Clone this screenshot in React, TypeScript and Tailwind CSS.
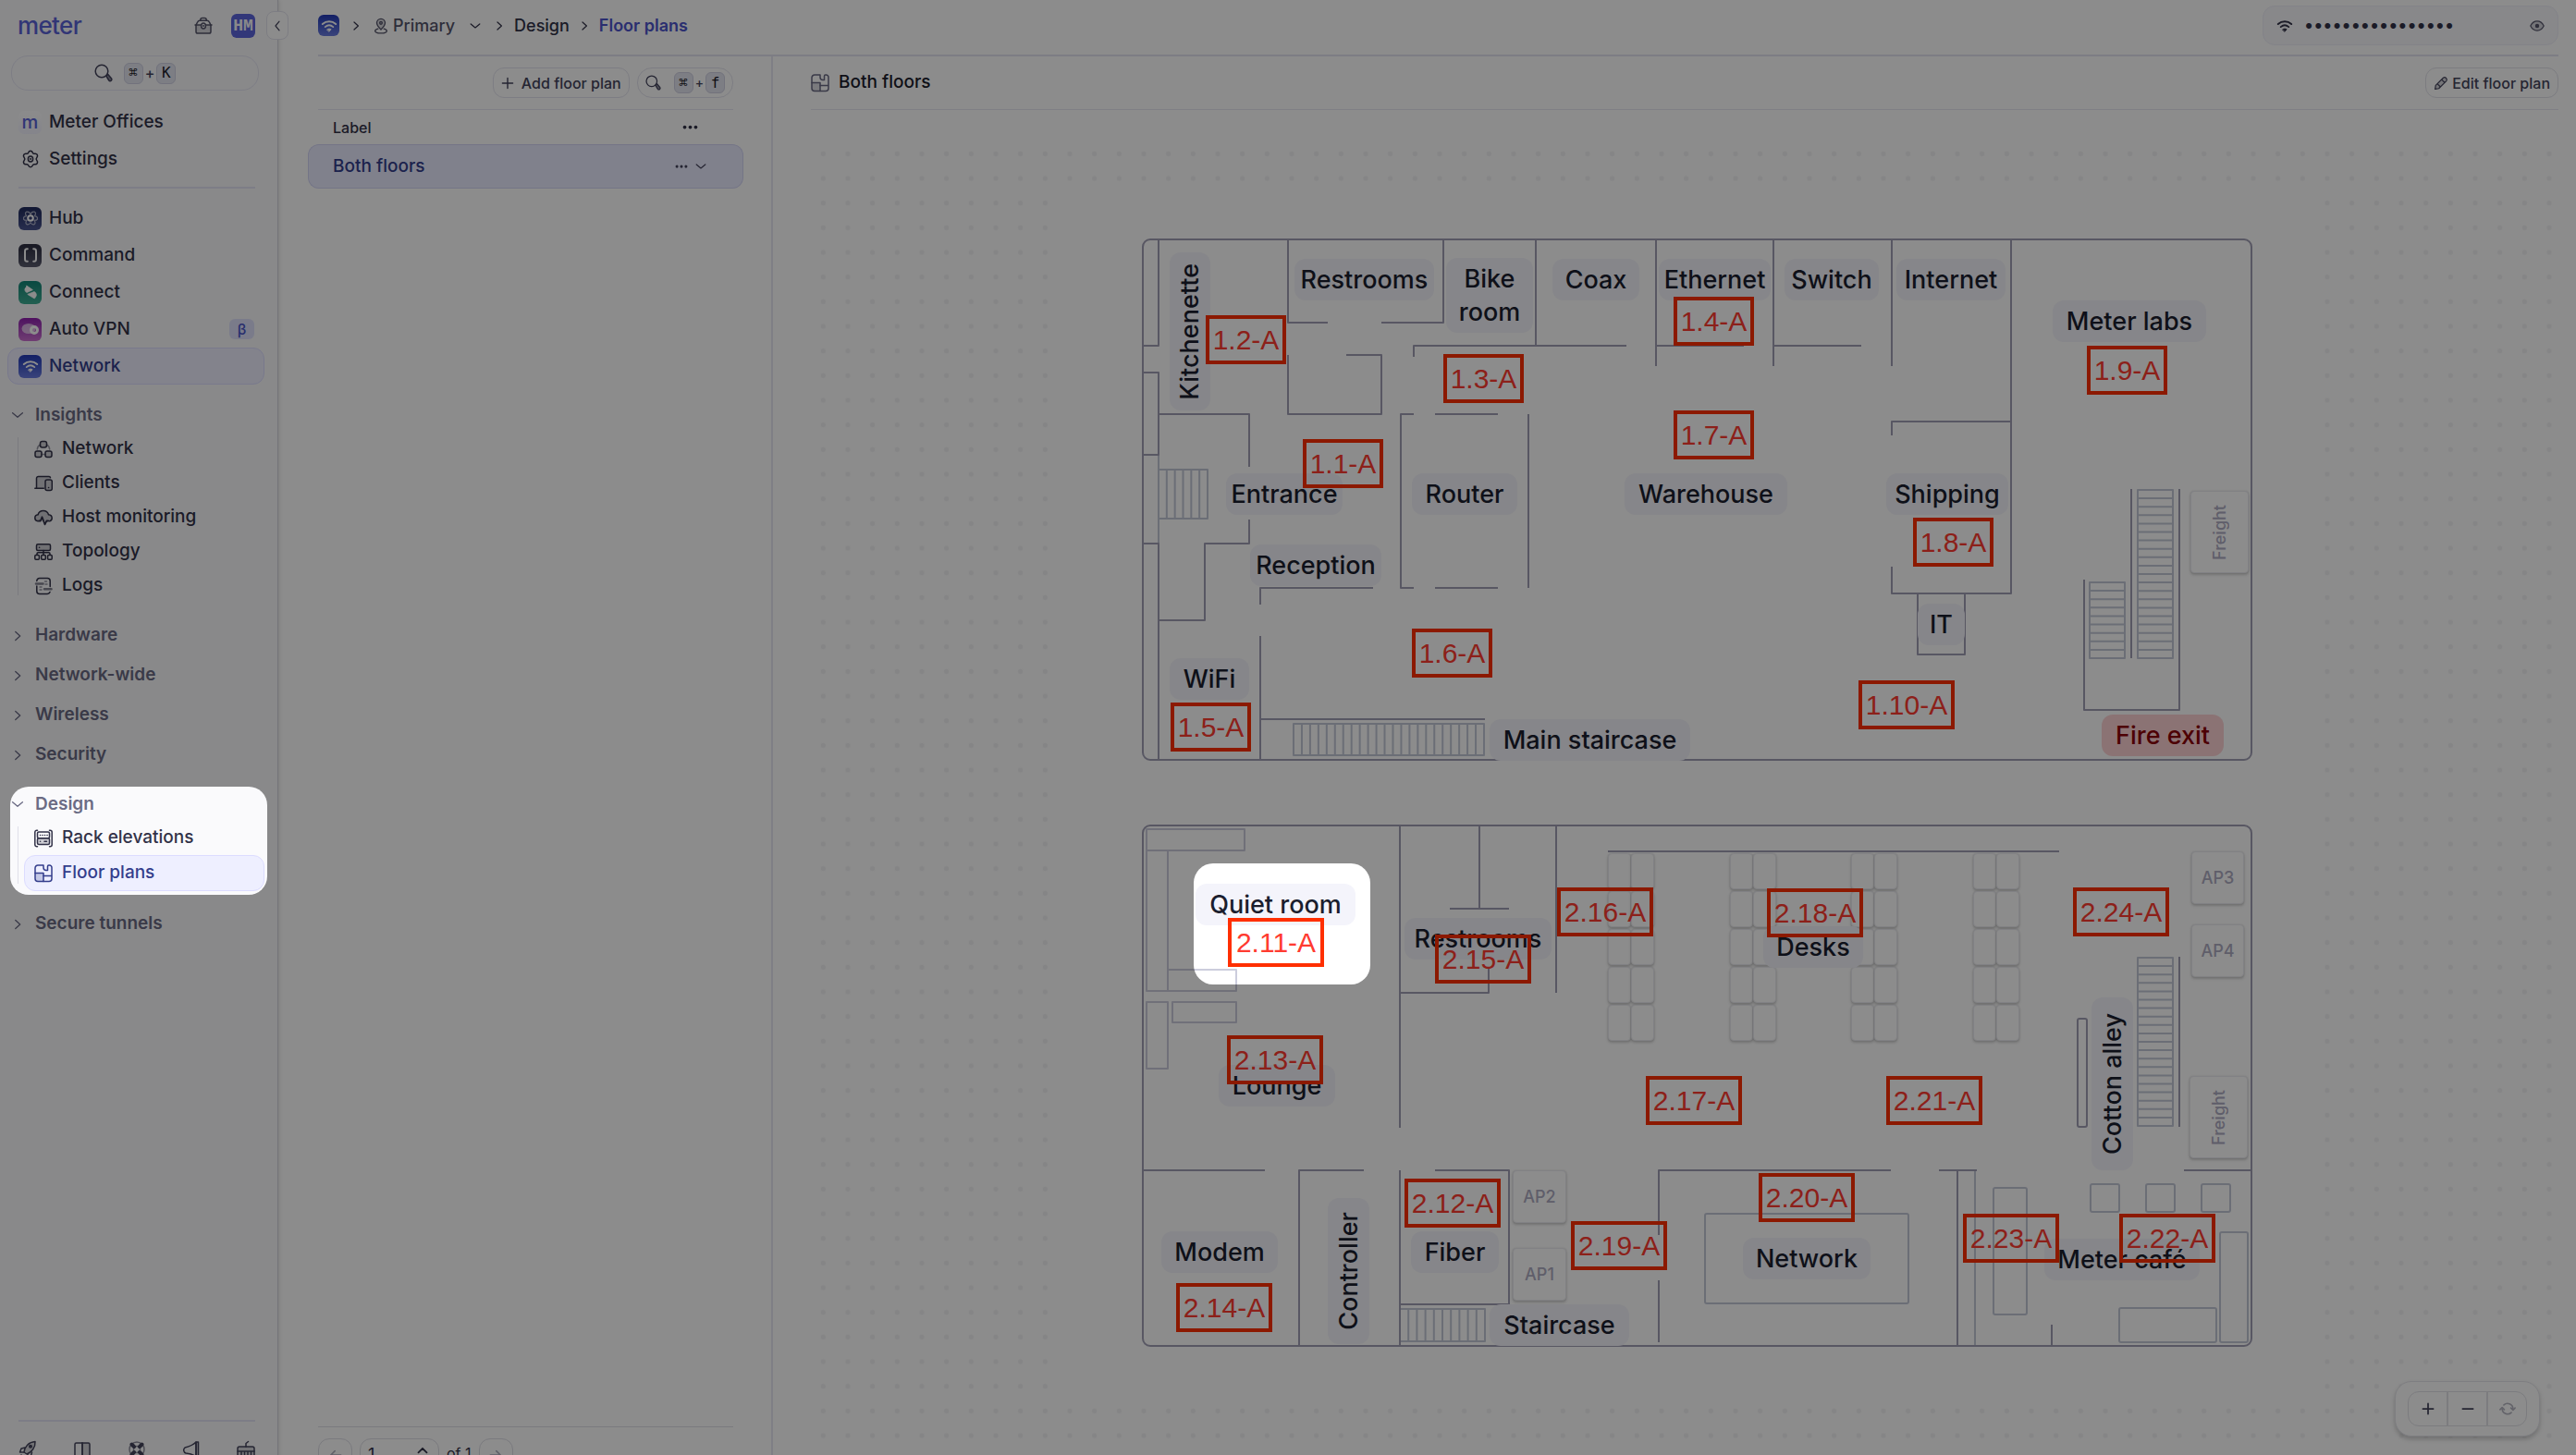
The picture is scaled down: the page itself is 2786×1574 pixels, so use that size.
import React from "react";

type IconProps = { className?: string };

function Icon({ className = "size-5", children }: IconProps & { children: React.ReactNode }) {
  return (
    <svg
      viewBox="0 0 20 20"
      fill="none"
      stroke="currentColor"
      strokeWidth="1.5"
      strokeLinecap="round"
      strokeLinejoin="round"
      className={"shrink-0 " + className}
      aria-hidden="true"
    >
      {children}
    </svg>
  );
}

const tint = { fill: "currentColor", fillOpacity: 0.22 };

const ToolboxIcon = (p: IconProps) => (
  <Icon {...p}>
    <path d="M6.800 4.200V3.500a2 2 0 0 1 2-2h2.400a2 2 0 0 1 2 2v.7" />
    <path d="M2 9l1.800-3.400A2.400 2.400 0 0 1 6 4.200h8a2.400 2.400 0 0 1 2.200 1.400L18 9" />
    <path d="M1 9h18M2 9h16v7.200a1.800 1.800 0 0 1-1.800 1.800H3.800A1.800 1.800 0 0 1 2 16.200z" {...tint} />
    <ellipse cx="10" cy="10" rx="2.400" ry="3" fill="#fafafc" />
    <path d="M10 9.500v1" />
  </Icon>
);
const SearchIcon = (p: IconProps) => (
  <Icon {...p}>
    <circle cx="8" cy="8" r="6.800" />
    <path d="m12.800 13.200 2-1.700 3.600 4.200a1.700 1.700 0 0 1-2.600 2.300z" fill="currentColor" fillOpacity="0.6" />
  </Icon>
);
const GearIcon = (p: IconProps) => (
  <Icon {...p}>
    <path d="M7.600 3.200C8.200 1.600 8.600 1.200 10 1.200s1.800.4 2.400 2c.4 1 1 1.300 2 1.100 1.700-.3 2.200-.1 2.900 1.100s.6 1.700-.5 3c-.7.800-.7 2.400 0 3.200 1.100 1.300 1.200 1.800.5 3s-1.200 1.400-2.900 1.100c-1-.2-1.600.1-2 1.100-.6 1.600-1 2-2.400 2s-1.800-.4-2.400-2c-.4-1-1-1.300-2-1.100-1.700.3-2.200.1-2.900-1.100s-.6-1.700.5-3c.7-.8.7-2.400 0-3.200-1.100-1.300-1.200-1.800-.5-3s1.200-1.400 2.900-1.100c1 .2 1.600-.1 2-1.100z" />
    <ellipse cx="10" cy="10" rx="2.600" ry="3" />
    <path d="M10 9.500v1" />
  </Icon>
);
const NodesIcon = (p: IconProps) => (
  <Icon {...p}>
    <rect x="6.500" y="1.500" width="7" height="6.500" rx="2.200" {...tint} />
    <rect x="1" y="12" width="7" height="6.500" rx="2" {...tint} />
    <rect x="12" y="12" width="7" height="6.500" rx="2" {...tint} />
    <path d="M6.500 5C4.500 6 3.500 8 3.300 10M13.500 5c2 1 3 3 3.200 5M8 15.500h4" strokeOpacity="0.5" />
  </Icon>
);
const ClientsIcon = (p: IconProps) => (
  <Icon {...p}>
    <path d="M2.500 14V4.500a2 2 0 0 1 2-2h12.500v3h-3.500a1.500 1.500 0 0 0-1.500 1.500v8H2.500z" {...tint} stroke="none" />
    <path d="M.8 15.200h9.500M2.500 15V4.500a2 2 0 0 1 2-2h11.500a1.500 1.500 0 0 1 1.500 1.200" />
    <rect x="12" y="6" width="7.300" height="11.500" rx="2" {...tint} />
    <path d="M15.500 14.500h.2" />
  </Icon>
);
const CloudPulseIcon = (p: IconProps) => (
  <Icon {...p}>
    <path d="M4 13.800C1.800 13.500.8 12 .8 10.300c0-2 1.400-3.400 3.300-3.600C4.800 4 7 2.500 9.800 2.500c3 0 5 1.700 5.700 4.200 2.200.2 3.700 1.600 3.700 3.800 0 1.600-.9 2.800-2.500 3.200" {...tint} />
    <path d="M5 13.500h1.800l1.700-4.200 3 8 1.900-3.800h1.800" strokeWidth="1.800" />
  </Icon>
);
const TopologyIcon = (p: IconProps) => (
  <Icon {...p}>
    <rect x="2.500" y="1.800" width="15" height="6.800" rx="1.500" {...tint} />
    <path d="M5.500 5.200h.2M10 8.600v5M3 13v-1a1.200 1.200 0 0 1 1.200-1.200h11.600A1.200 1.200 0 0 1 17 12v1" />
    <rect x=".8" y="13.600" width="4.600" height="4.600" rx="1" />
    <rect x="7.700" y="13.600" width="4.600" height="4.600" rx="1" />
    <rect x="14.600" y="13.600" width="4.600" height="4.600" rx="1" />
  </Icon>
);
const LogsIcon = (p: IconProps) => (
  <Icon {...p}>
    <path d="M2.800 4.500a3 3 0 0 1 3-3h8.400a3 3 0 0 1 3 3v6M2.800 10v5.500a3 3 0 0 0 3 3h8.400a3 3 0 0 0 2.800-2" />
    <path d="M2 7.500h7.500M11 13.300h7.500" strokeWidth="2.600" strokeOpacity="0.6" />
    <path d="M11.500 5h2M12 8h2M6 11h2M6 14h2" strokeOpacity="0.5" />
  </Icon>
);
const RackIcon = (p: IconProps) => (
  <Icon {...p}>
    <path d="M3.500 1.200H2.800A2 2 0 0 0 .8 3.200v13.600a2 2 0 0 0 2 2h.7M16.500 1.200h.7a2 2 0 0 1 2 2v13.600a2 2 0 0 1-2 2h-.7" />
    <rect x="3.500" y="3" width="13" height="6.800" rx="1.500" />
    <rect x="3.500" y="9.800" width="13" height="6.800" rx="1.500" {...tint} />
    <path d="M6.500 6.400h.1M9 6.400h.1M11.500 6.400h.1M14 6.400h.1M6.500 13.200h.1M11 13.200h2.500" />
  </Icon>
);
const FloorIcon = (p: IconProps) => (
  <Icon {...p}>
    <path d="M1 9.500h9v9H4a3 3 0 0 1-3-3z" {...tint} />
    <path d="M10 12.500h9M1 9.500V4a3 3 0 0 1 3-3h6v2.500a3 3 0 0 0 3 3h1.500V2.200A1.200 1.200 0 0 1 15.700 1h.8A2.500 2.500 0 0 1 19 3.500v12a3 3 0 0 1-3 3h-6" />
  </Icon>
);
const ChevronDown = (p: IconProps) => (
  <Icon {...p}>
    <path d="m4 7.500 6 5 6-5" />
  </Icon>
);
const ChevronRight = (p: IconProps) => (
  <Icon {...p}>
    <path d="m7.500 5 5.500 5-5.500 5" />
  </Icon>
);
const ChevronLeft = (p: IconProps) => (
  <Icon {...p}>
    <path d="m12.500 4-5 6 5 6" />
  </Icon>
);
const PinIcon = (p: IconProps) => (
  <Icon {...p}>
    <path d="M10 14.500C7 11.500 5 9.500 5 6.500a5 5 0 0 1 10 0c0 3-2 5-5 8z" {...tint} />
    <circle cx="10" cy="6.500" r="1.500" />
    <path d="M6.500 13.500C4.500 14 3 14.800 3 16c0 1.600 3 2.700 7 2.700s7-1.100 7-2.700c0-1.200-1.500-2-3.500-2.500" />
  </Icon>
);
const DotsIcon = ({ className }: IconProps) => (
  <svg viewBox="0 0 20 6" className={"shrink-0 " + className} fill="currentColor" aria-hidden="true">
    <circle cx="3" cy="3" r="2.200" />
    <circle cx="10" cy="3" r="2.200" />
    <circle cx="17" cy="3" r="2.200" />
  </svg>
);
const WifiGlyph = ({ className }: IconProps) => (
  <svg viewBox="0 0 20 20" className={"shrink-0 " + className} fill="none" stroke="currentColor" strokeLinecap="round" aria-hidden="true">
    <path d="M2 7.800c4.700-4 11.300-4 16 0" strokeWidth="2.200" />
    <path d="M5.200 11.200c2.900-2.400 6.700-2.400 9.600 0" strokeWidth="2" />
    <path d="M7.600 14.200c1.400-1 3.400-1 4.800 0L10 16.800z" fill="currentColor" strokeWidth="1" />
  </svg>
);
const EyeIcon = (p: IconProps) => (
  <Icon {...p}>
    <path d="M1 10c2-4 5-6.300 9-6.300s7 2.300 9 6.300c-2 4-5 6.300-9 6.300S3 14 1 10z" {...tint} />
    <circle cx="10" cy="10" r="2" fill="currentColor" />
  </Icon>
);
const PencilIcon = (p: IconProps) => (
  <Icon {...p}>
    <path d="m2 18 .8-5L13 2.800a3 3 0 0 1 4.200 4.200L7 17.200zM10.800 5l4.200 4.200M5 10.800 9.200 15" {...tint} />
  </Icon>
);
const RefreshIcon = (p: IconProps) => (
  <Icon {...p}>
    <path d="M5.500 5.500a6.500 6.500 0 0 1 11 4.500M14.500 14.500a6.500 6.500 0 0 1-11-4.500" strokeWidth="1.800" />
    <path d="m14 9 2.500 2.500L19 9M1 11l2.500-2.500L6 11" strokeWidth="1.800" />
  </Icon>
);
const RocketIcon = (p: IconProps) => (
  <Icon {...p}>
    <path d="M6 13C6.500 7 11 2 18 1.500 18.500 8 14 13 9 15z" {...tint} />
    <circle cx="13" cy="6.800" r="1.300" fill="currentColor" />
    <path d="M7 8 3 9l-1.500 4L6 13M10 15l-.5 4 4-2 1-4M3 16l-1.500 2.500" />
  </Icon>
);
const BookIcon = (p: IconProps) => (
  <Icon {...p}>
    <path d="M10 3v16" />
    <path d="M10 3h6.500A1.500 1.500 0 0 1 18 4.500V19h-8z" {...tint} />
    <path d="M10 3H3.500A1.500 1.500 0 0 0 2 4.500V19h8" />
  </Icon>
);
const BuoyIcon = (p: IconProps) => (
  <Icon {...p}>
    <circle cx="10" cy="10" r="8" strokeOpacity="0.6" />
    <circle cx="10" cy="10" r="3.500" strokeOpacity="0.6" />
    <path d="M4.500 4.500 7 7M15.500 4.500 13 7M4.500 15.500 7 13M15.500 15.500 13 13" strokeWidth="4" />
  </Icon>
);
const HornIcon = (p: IconProps) => (
  <Icon {...p}>
    <path d="M15 2v16C12 15 8 14.500 4 14a3.500 3.500 0 0 1-1-6C7 7 12 5 15 2z" />
    <path d="M15 2h2.500v16H15z" {...tint} />
  </Icon>
);
const BotIcon = (p: IconProps) => (
  <Icon {...p}>
    <rect x="1" y="7" width="18" height="12" rx="2" {...tint} />
    <path d="M1 12h18M10 7V3.500L12.500 1.500M5 13v3M8.500 13v3M12 13v3M15.500 13v3" />
  </Icon>
);

function Tile({ kind, className = "size-[25px] rounded-md" }: { kind: string; className?: string }) {
  const bg: Record<string, string> = {
    hub: "bg-linear-to-b from-[#1f2a5c] to-[#4b5590]",
    command: "bg-linear-to-b from-[#2c2d40] to-[#5a5b6e]",
    connect: "bg-linear-to-b from-[#0f8577] to-[#3fae94]",
    vpn: "bg-linear-to-b from-[#8f1cae] to-[#cc6fd0]",
    network: "bg-linear-to-b from-[#2338b8] to-[#6a7be0]",
  };
  return (
    <span className={"flex shrink-0 items-center justify-center text-white " + className + " " + bg[kind]}>
      {kind === "network" && <WifiGlyph className="size-[18px]" />}
      {kind === "hub" && (
        <Icon className="size-4">
          <path d="M10 5C8-1 0 1 4.500 7 -1 8-1 13 5 13c-4 5 2 8 5 3 3 5 9 2 5-3 6 0 6-5 .5-6C20 1 12-1 10 5z" strokeOpacity="0.6" />
          <circle cx="10" cy="10" r="3.500" strokeWidth="2.500" />
        </Icon>
      )}
      {kind === "command" && (
        <Icon className="size-4">
          <path d="M6 1.500C2.500 1.500 2.500 3 2.500 6v8c0 3 0 4.500 3.500 4.500M14 1.500c3.500 0 3.500 1.500 3.500 4.500v8c0 3 0 4.500-3.500 4.500" strokeWidth="2.500" />
        </Icon>
      )}
      {kind === "connect" && (
        <Icon className="size-4">
          <path d="M5 1.500 13 7 5 10.500a4 4 0 0 1-1-7zM15 18.500 6 13l9-3.500a4.500 4.500 0 0 1 2 7z" fill="currentColor" strokeWidth="1" />
        </Icon>
      )}
      {kind === "vpn" && (
        <Icon className="size-5">
          <ellipse cx="8" cy="9.500" rx="7.500" ry="5.500" fill="currentColor" fillOpacity="0.6" stroke="none" />
          <circle cx="14" cy="11" r="3.500" strokeWidth="3" />
        </Icon>
      )}
    </span>
  );
}

function Kbd({ children }: { children: React.ReactNode }) {
  return (
    <kbd className="flex h-[23px] w-[21px] items-center justify-center rounded-md border border-[#cfd0e2] bg-[#e4e5f1] font-['DejaVu_Sans_Mono',monospace] text-base text-[#1c1c28]">
      {children}
    </kbd>
  );
}

const apps = [
  { kind: "hub", label: "Hub" },
  { kind: "command", label: "Command" },
  { kind: "connect", label: "Connect" },
  { kind: "vpn", label: "Auto VPN", beta: true },
  { kind: "network", label: "Network", active: true },
];

type Section = { label: string; items?: { label: string; icon: React.ReactNode; active?: boolean }[] };
const sections: Section[][] = [
  [
    {
      label: "Insights",
      items: [
        { label: "Network", icon: <NodesIcon /> },
        { label: "Clients", icon: <ClientsIcon /> },
        { label: "Host monitoring", icon: <CloudPulseIcon /> },
        { label: "Topology", icon: <TopologyIcon /> },
        { label: "Logs", icon: <LogsIcon /> },
      ],
    },
  ],
  [{ label: "Hardware" }, { label: "Network-wide" }, { label: "Wireless" }, { label: "Security" }],
  [
    {
      label: "Design",
      items: [
        { label: "Rack elevations", icon: <RackIcon /> },
        { label: "Floor plans", icon: <FloorIcon />, active: true },
      ],
    },
  ],
  [{ label: "Secure tunnels" }],
];

function Sidebar() {
  return (
    <aside className="relative flex w-[301px] shrink-0 flex-col border-r border-[#d4d4dc] bg-[#fafafc] pb-2 text-[19px] font-medium text-[#323248] shadow-[1px_0_4px_rgba(0,0,0,0.12)]">
      <div className="flex h-14 items-center pl-[19px] pr-6">
        <a href="#" className="text-[26px] leading-none tracking-tight text-[#5a63d8]">meter</a>
        <button aria-label="Toolbox" className="ml-auto text-[#55556a]">
          <ToolboxIcon />
        </button>
        <button className="ml-5 flex size-[26px] items-center justify-center rounded-md bg-[#5b64dc] font-['Liberation_Mono',monospace] text-lg font-bold text-[#fafafc]">
          HM
        </button>
      </div>
      <button
        aria-label="Collapse sidebar"
        className="absolute -right-3 top-3 flex h-[31px] w-6 items-center justify-center rounded-lg border border-[#e4e4ee] bg-white text-[#44445c]"
      >
        <ChevronLeft className="size-4" />
      </button>
      <button
        aria-label="Search"
        className="ml-3 mr-5 mt-1 flex h-[38px] shrink-0 items-center justify-center rounded-[18px] border border-[#e4e4f2] text-[#44445c]"
      >
        <SearchIcon />
        <span className="ml-3 flex items-center gap-0.5 text-base">
          <Kbd>⌘</Kbd>+<Kbd>K</Kbd>
        </span>
      </button>

      <nav className="mt-3.5 flex flex-col">
        <a href="#" className="flex h-10 items-center gap-2 pl-5">
          <span className="flex size-[25px] items-center justify-center rounded-md bg-linear-to-b from-white to-[#f1f1fd] text-xl leading-none text-[#5a63d8]">
            m
          </span>
          Meter Offices
        </a>
        <a href="#" className="flex h-10 items-center gap-2 pl-5">
          <span className="flex size-[25px] items-center justify-center">
            <GearIcon />
          </span>
          Settings
        </a>
      </nav>
      <hr className="ml-5 mr-6 mt-2.5 border-t-2 border-[#e4e4f4]" />
      <nav className="mt-3 flex flex-col pl-2 pr-3.5">
        {apps.map((a) => (
          <a
            key={a.label}
            href="#"
            className={
              "flex h-10 items-center gap-2 rounded-xl border pl-[11px] pr-2.5 " +
              (a.active ? "border-[#dcdcff] bg-[#eeefff] text-[#343e8c]" : "border-transparent")
            }
          >
            <Tile kind={a.kind} />
            {a.label}
            {a.beta && (
              <span className="ml-auto flex h-[22px] w-[27px] items-center justify-center rounded-md bg-[#dfe1fb] text-base text-[#4a54c8]">β</span>
            )}
          </a>
        ))}
      </nav>

      <nav className="mt-[15px] flex flex-col gap-3.5 pr-3.5">
        {sections.map((group) => (
          <div key={group[0].label}>
            {group.map((s) => (
              <div key={s.label}>
                <button
                  className={
                    "flex w-full items-center gap-2.5 pl-2.5 font-semibold text-[#6b6b84] " + (s.items ? "h-9" : "h-[43px]")
                  }
                >
                  {s.items ? <ChevronDown className="size-[18px]" /> : <ChevronRight className="size-[18px]" />}
                  {s.label}
                </button>
                {s.items && (
                  <ul className="relative before:absolute before:bottom-2 before:left-[19px] before:top-1.5 before:w-px before:bg-[#e0e0ea]">
                    {s.items.map((it) => (
                      <li key={it.label}>
                        <a
                          href="#"
                          className={
                            "ml-[26px] flex items-center gap-2.5 rounded-xl " +
                            (it.active ? "h-[39px] border border-[#dcdcff] bg-[#eeefff] pl-2.5 text-[#343e8c]" : "h-[37px] pl-[11px]")
                          }
                        >
                          {it.icon}
                          {it.label}
                        </a>
                      </li>
                    ))}
                  </ul>
                )}
              </div>
            ))}
          </div>
        ))}
      </nav>

      <div className="ml-5 mr-6 mt-auto flex h-[46px] items-start justify-between border-t-2 border-[#e4e4f4] pt-5 text-[#44445c]">
        <button aria-label="What's new"><RocketIcon /></button>
        <button aria-label="Documentation"><BookIcon /></button>
        <button aria-label="Support"><BuoyIcon /></button>
        <button aria-label="Feedback"><HornIcon /></button>
        <button aria-label="Assistant"><BotIcon /></button>
      </div>
    </aside>
  );
}

function TopBar() {
  return (
    <header className="ml-[43px] mr-[19px] flex h-[61px] shrink-0 items-center border-b-2 border-[#e4e4f0] pb-1 text-lg font-medium">
      <nav className="flex items-center text-[#323248]">
        <a href="#" aria-label="Network">
          <Tile kind="network" className="size-[23px] rounded-md" />
        </a>
        <ChevronRight className="ml-2.5 size-4" />
        <button className="ml-2.5 flex items-center gap-1 text-[#55556a]">
          <PinIcon className="size-[18px]" />
          Primary
          <ChevronDown className="ml-2.5 size-4 text-[#323248]" />
        </button>
        <ChevronRight className="ml-2.5 size-4" />
        <a href="#" className="ml-2">Design</a>
        <ChevronRight className="ml-2 size-4" />
        <a href="#" className="ml-2 font-semibold text-[#4d55cc]">Floor plans</a>
      </nav>
      <label className="ml-auto flex h-[43px] w-[320px] items-center gap-3 rounded-[13px] border border-[#eeeef8] bg-[#f8f8fb] px-3.5 text-[#323248]">
        <WifiGlyph className="size-[18px]" />
        <input
          type="password"
          readOnly
          aria-label="Wi-Fi password"
          value="officenetwork123"
          className="min-w-0 flex-1 bg-transparent font-['Inter',sans-serif] text-[19px] outline-none"
        />
        <button aria-label="Show password" className="text-[#55556a]">
          <EyeIcon className="size-4" />
        </button>
      </label>
    </header>
  );
}

function ListPanel() {
  return (
    <section className="flex w-[535px] shrink-0 flex-col border-r-2 border-[#e8e8f2] pl-[43px] pr-[41px] text-[#323248]">
      <div className="flex h-[58px] shrink-0 items-center justify-end gap-2 border-b border-[#e8e8f2] text-base font-medium text-[#44445c]">
        <button className="flex h-[33px] items-center gap-2 rounded-xl border border-[#e4e4ee] px-2">
          <Icon className="size-3.5">
            <path d="M10 2v16M2 10h16" strokeWidth="2" />
          </Icon>
          Add floor plan
        </button>
        <button aria-label="Search floor plans" className="flex h-[33px] items-center rounded-2xl border border-[#e4e4ee] px-2">
          <SearchIcon className="size-[17px]" />
          <span className="ml-3.5 flex items-center gap-0.5 text-sm">
            <Kbd>⌘</Kbd>+<Kbd>f</Kbd>
          </span>
        </button>
      </div>
      <table className="-mx-[11px] border-separate border-spacing-0 text-left font-medium">
        <thead>
          <tr>
            <th className="h-[37px] pl-[27px] text-base font-medium">Label</th>
            <th className="w-24 pl-[30px]">
              <button aria-label="Columns" className="block">
                <DotsIcon className="w-[17px]" />
              </button>
            </th>
          </tr>
        </thead>
        <tbody>
          <tr className="text-[#343e8c]">
            <td className="h-12 rounded-l-xl border-y border-l border-[#d4d5f5] bg-[#eaebff] pl-[26px] text-[19px]">Both floors</td>
            <td className="h-12 rounded-r-xl border-y border-r border-[#d4d5f5] bg-[#eaebff] pl-[22px] text-[#44445c]">
              <button aria-label="Row actions" className="flex items-center gap-1.5">
                <DotsIcon className="w-3.5" />
                <ChevronDown className="size-4" />
              </button>
            </td>
          </tr>
        </tbody>
      </table>
      <div className="mt-auto flex h-[47px] shrink-0 items-start gap-2 border-t border-[#dedee6] pt-3 text-lg">
        <button aria-label="Previous page" className="flex h-[35px] w-[37px] items-center justify-center rounded-xl border border-[#dedee6] text-[#b0b0c0]">
          <Icon className="size-4"><path d="M17 10H4M9 4.500 3.500 10 9 15.500" strokeWidth="2" /></Icon>
        </button>
        <label className="flex h-[35px] w-[86px] items-center rounded-xl border border-[#dedee6] px-2">
          <input aria-label="Page" defaultValue="1" className="w-full min-w-0 bg-transparent outline-none" />
          <Icon className="size-[18px]"><path d="m5 7 5-5 5 5M5 13l5 5 5-5" strokeWidth="2" /></Icon>
        </label>
        <span className="pt-1 text-base">of 1</span>
        <button aria-label="Next page" className="flex h-[35px] w-[37px] items-center justify-center rounded-xl border border-[#dedee6] text-[#b0b0c0]">
          <Icon className="size-4"><path d="M3 10h13M11 4.500l5.500 5.500-5.500 5.500" strokeWidth="2" /></Icon>
        </button>
      </div>
    </section>
  );
}

type Box = { t: string; x: number; y: number; w: number; h?: number; v?: boolean; alert?: boolean };
type Tag = [string, number, number];

const labels1: Box[] = [
  { t: "Kitchenette", x: 29, y: 14, w: 44, h: 171, v: true },
  { t: "Restrooms", x: 164, y: 21, w: 151 },
  { t: "Bike room", x: 328, y: 20, w: 94, h: 81 },
  { t: "Coax", x: 443, y: 21, w: 94 },
  { t: "Ethernet", x: 558, y: 21, w: 121 },
  { t: "Switch", x: 694, y: 21, w: 102 },
  { t: "Internet", x: 815, y: 21, w: 118 },
  { t: "Meter labs", x: 984, y: 66, w: 166 },
  { t: "Entrance", x: 90, y: 253, w: 126 },
  { t: "Router", x: 291, y: 253, w: 114 },
  { t: "Warehouse", x: 521, y: 253, w: 176 },
  { t: "Shipping", x: 804, y: 253, w: 132 },
  { t: "Reception", x: 116, y: 330, w: 142 },
  { t: "IT", x: 838, y: 394, w: 51 },
  { t: "WiFi", x: 29, y: 453, w: 86 },
  { t: "Main staircase", x: 375, y: 519, w: 217 },
  { t: "Fire exit", x: 1037, y: 514, w: 132, alert: true },
];
const tags1: Tag[] = [
  ["1.2-A", 68, 82],
  ["1.3-A", 325, 124],
  ["1.1-A", 173, 216],
  ["1.6-A", 291, 421],
  ["1.5-A", 30, 501],
  ["1.4-A", 574, 62],
  ["1.7-A", 574, 185],
  ["1.9-A", 1021, 115],
  ["1.8-A", 833, 301],
  ["1.10-A", 774, 477],
];
const labels2: Box[] = [
  { t: "Quiet room", x: 57, y: 63, w: 173 },
  { t: "Restrooms", x: 283, y: 100, w: 159 },
  { t: "Lounge", x: 82, y: 259, w: 126 },
  { t: "Modem", x: 20, y: 439, w: 126 },
  { t: "Controller", x: 200, y: 403, w: 45, h: 158, v: true },
  { t: "Fiber", x: 290, y: 439, w: 95 },
  { t: "Staircase", x: 375, y: 518, w: 151 },
  { t: "Desks", x: 671, y: 109, w: 108 },
  { t: "Network", x: 649, y: 446, w: 138 },
  { t: "Meter café", x: 975, y: 447, w: 168 },
  { t: "Cotton alley", x: 1026, y: 186, w: 45, h: 187, v: true },
];
const tags2: Tag[] = [
  ["2.11-A", 92, 100],
  ["2.15-A", 316, 118],
  ["2.16-A", 448, 67],
  ["2.13-A", 91, 227],
  ["2.17-A", 544, 271],
  ["2.12-A", 283, 382],
  ["2.19-A", 463, 428],
  ["2.14-A", 36, 495],
  ["2.18-A", 675, 68],
  ["2.24-A", 1006, 67],
  ["2.21-A", 804, 271],
  ["2.20-A", 666, 376],
  ["2.23-A", 887, 420],
  ["2.22-A", 1056, 420],
];
const cards1: Box[] = [{ t: "Freight", x: 1133, y: 272, w: 63, h: 89, v: true }];
const cards2: Box[] = [
  { t: "AP2", x: 400, y: 373, w: 58, h: 57 },
  { t: "AP1", x: 400, y: 457, w: 58, h: 57 },
  { t: "AP3", x: 1134, y: 28, w: 57, h: 57 },
  { t: "AP4", x: 1134, y: 107, w: 57, h: 57 },
  { t: "Freight", x: 1132, y: 271, w: 63, h: 89, v: true },
];
for (const x of [503, 635, 766, 898]) {
  for (let r = 0; r < 5; r++) {
    cards2.push({ t: "", x, y: 30 + r * 41, w: 25, h: 39 }, { t: "", x: x + 25, y: 30 + r * 41, w: 25, h: 39 });
  }
}

function Stairs({ x, y, w, h, n, vertical }: { x: number; y: number; w: number; h: number; n: number; vertical?: boolean }) {
  let d = "";
  for (let i = 1; i < n; i++) {
    d += vertical ? `M${x} ${y + (h * i) / n}h${w}` : `M${x + (w * i) / n} ${y}v${h}`;
  }
  return (
    <g stroke="#c3c9d8" strokeWidth="2">
      <rect x={x} y={y} width={w} height={h} />
      <path d={d} />
    </g>
  );
}

function Plan({ walls, labels, tags, cards }: { walls: React.ReactNode; labels: Box[]; tags: Tag[]; cards: Box[] }) {
  return (
    <div className="relative h-[564px] w-[1200px] font-medium">
      <svg viewBox="0 0 1200 564" fill="none" strokeLinejoin="round" className="absolute inset-0 size-full overflow-visible" aria-hidden="true">
        {walls}
        <rect x="0" y="0" width="1199" height="563" rx="8" stroke="#a19fb5" strokeWidth="2" />
      </svg>
      {cards.map((c, i) => (
        <div
          key={i}
          className="absolute flex items-center justify-center rounded border border-[#ececf0] bg-white text-lg text-[#aeacc2] shadow-[0_2px_3px_rgba(0,0,0,0.18),0_0_2px_rgba(0,0,0,0.12)]"
          style={{ left: c.x, top: c.y, width: c.w, height: c.h }}
        >
          {c.t && <span className={c.v ? "rotate-180 [writing-mode:vertical-rl]" : ""}>{c.t}</span>}
        </div>
      ))}
      {labels.map((l) => (
        <div
          key={l.t}
          className={
            "absolute flex items-center justify-center rounded-xl text-center text-[27px] leading-9 " +
            (l.alert ? "bg-[#fdd2d4] text-[#8c0009]" : "bg-[#f4f4fb] text-[#1b1e2e]")
          }
          style={{ left: l.x, top: l.y, width: l.w, height: l.h ?? 45 }}
        >
          <span className={l.v ? "rotate-180 whitespace-nowrap [writing-mode:vertical-rl]" : l.t === "Bike room" ? "w-20" : "whitespace-nowrap"}>
            {l.t}
          </span>
        </div>
      ))}
      {tags.map(([t, x, y]) => (
        <div
          key={t}
          className="absolute flex h-[53px] items-center justify-center whitespace-nowrap border-4 border-[#ff2f00] font-['Liberation_Sans',sans-serif] text-3xl font-normal text-[#ff3b30]"
          style={{ left: x, top: y, width: t.length > 5 ? 104 : 87 }}
        >
          {t}
        </div>
      ))}
    </div>
  );
}

const wall = "#a19fb5";
const soft = "#c3c9d8";

const floorOne = (
  <>
    <path d="M17 233V329" stroke={soft} strokeWidth="2" />
    <Stairs x={17} y={249} w={53} h={53} n={6} />
    <Stairs x={163} y={524} w={206} h={34} n={23} />
    <Stairs x={1076} y={271} w={38} h={182} n={20} vertical />
    <Stairs x={1024} y={371} w={38} h={82} n={9} vertical />
    <path
      stroke={wall}
      strokeWidth="2"
      d="M17 0V115H0M0 144H17V233H0M0 329H17V563M157 0V90H200M258 90H325V0M425 0V115M293 127V115H523M555 0V137M555 115H650M682 0V137M682 115H777M810 0V137M939 0V383H810V354M939 197H810V212M838 383V449H889V383M157 125V189H258V125H220M17 189H115V246M115 303V329H67V412H17M293 189H279V377H293M316 189H384M316 377H384M417 189V377M127 395V377H249M127 429V563M127 519H370M1018 368V509H1121V270M1069 270V453"
    />
  </>
);

const floorTwo = (
  <>
    <Stairs x={278} y={523} w={92} h={35} n={10} />
    <Stairs x={1076} y={143} w={38} h={182} n={20} vertical />
    <path
      stroke="#cccddd"
      strokeWidth="2"
      d="M4 4H110V27H4zM4 27H27V179H4zM27 156H101V179H27zM4 191H27V263H4zM32 191H101V213H32z"
    />
    <g stroke={soft} strokeWidth="2">
      <path d="M900 373V563" />
      <rect x="608" y="420" width="220" height="97" rx="2" />
      <rect x="920" y="392" width="36" height="137" rx="2" />
      <rect x="1025" y="388" width="31" height="30" rx="2" />
      <rect x="1085" y="388" width="31" height="30" rx="2" />
      <rect x="1145" y="388" width="31" height="30" rx="2" />
      <rect x="1056" y="522" width="105" height="37" rx="2" />
      <rect x="1165" y="440" width="30" height="119" rx="2" />
    </g>
    <rect x="1011" y="209" width="10" height="117" rx="2" stroke={wall} strokeWidth="2" />
    <path
      stroke={wall}
      strokeWidth="2"
      d="M278 0V327M278 373V563M364 0V90M332 90H396M447 0V181M278 181H374V155M503 28H991M0 373H132M239 373H169V563M316 373H396V518H278M558 443V373H809M558 492V559M861 373H902M881 373V563M1126 373H1199M983 540V563M1121 142V326"
    />
  </>
);

function CanvasPanel() {
  return (
    <section className="flex min-w-0 flex-1 flex-col pl-[41px] pr-[19px]">
      <div className="flex h-[58px] shrink-0 items-center border-b border-[#e8e8f0]">
        <FloorIcon className="size-5 text-[#6b6b84]" />
        <h1 className="ml-2.5 text-[19px] font-medium text-[#1c1c2c]">Both floors</h1>
        <button className="ml-auto flex h-[33px] items-center gap-1 rounded-xl border border-[#e2e2ea] px-2 text-base font-medium text-[#44445c]">
          <PencilIcon className="size-4" />
          Edit floor plan
        </button>
      </div>
      <div className="relative flex-1 overflow-hidden">
        <svg className="absolute inset-x-0 bottom-0 top-[34px] size-full" aria-hidden="true">
          <defs>
            <pattern id="grid" width="26.667" height="26.667" patternUnits="userSpaceOnUse">
              <circle cx="13.333" cy="13.333" r="2.600" fill="#f3f3f4" />
            </pattern>
          </defs>
          <rect width="100%" height="100%" fill="url(#grid)" />
        </svg>
        <div className="absolute left-[263px] top-[87px] flex h-[1306px] w-[1360px] flex-col gap-[70px] bg-white pl-24 pt-[53px]">
          <Plan walls={floorOne} labels={labels1} tags={tags1} cards={cards1} />
          <Plan walls={floorTwo} labels={labels2} tags={tags2} cards={cards2} />
        </div>
        <div className="absolute bottom-[36px] right-5 flex h-[60px] w-[157px] items-center justify-center rounded-[18px] border border-[#e6e6ec] bg-white shadow-[0_3px_5px_rgba(0,0,0,0.2)]">
          <div className="flex h-[38px] w-[129px] divide-x-2 divide-[#e2e2e8] rounded-xl border border-[#e2e2e8] text-[#44445c]">
            <button aria-label="Zoom in" className="flex flex-1 items-center justify-center">
              <Icon className="size-3.5"><path d="M10 2v16M2 10h16" strokeWidth="2.500" /></Icon>
            </button>
            <button aria-label="Zoom out" className="flex flex-1 items-center justify-center">
              <Icon className="size-3.5"><path d="M2 10h16" strokeWidth="2.500" /></Icon>
            </button>
            <button aria-label="Reset view" className="flex flex-1 items-center justify-center text-[#b4b4c0]">
              <RefreshIcon className="size-[18px]" />
            </button>
          </div>
        </div>
      </div>
    </section>
  );
}

function Spotlight() {
  return (
    <svg className="pointer-events-none fixed inset-0 z-50 size-full" aria-hidden="true">
      <defs>
        <mask id="spots">
          <rect width="100%" height="100%" fill="white" />
          <rect x="11" y="851" width="278" height="117" rx="20" fill="black" />
          <rect x="1291" y="934" width="191" height="131" rx="21" fill="black" />
        </mask>
      </defs>
      <rect width="100%" height="100%" fill="black" fillOpacity="0.45" mask="url(#spots)" />
    </svg>
  );
}

export default function App() {
  return (
    <div className="h-screen overflow-hidden bg-white font-['Inter',sans-serif]">
      <div className="flex h-[calc(100vh+16px)]">
        <Sidebar />
        <main className="flex min-w-0 flex-1 flex-col">
          <TopBar />
          <div className="flex min-h-0 flex-1">
            <ListPanel />
            <CanvasPanel />
          </div>
        </main>
      </div>
      <Spotlight />
    </div>
  );
}
